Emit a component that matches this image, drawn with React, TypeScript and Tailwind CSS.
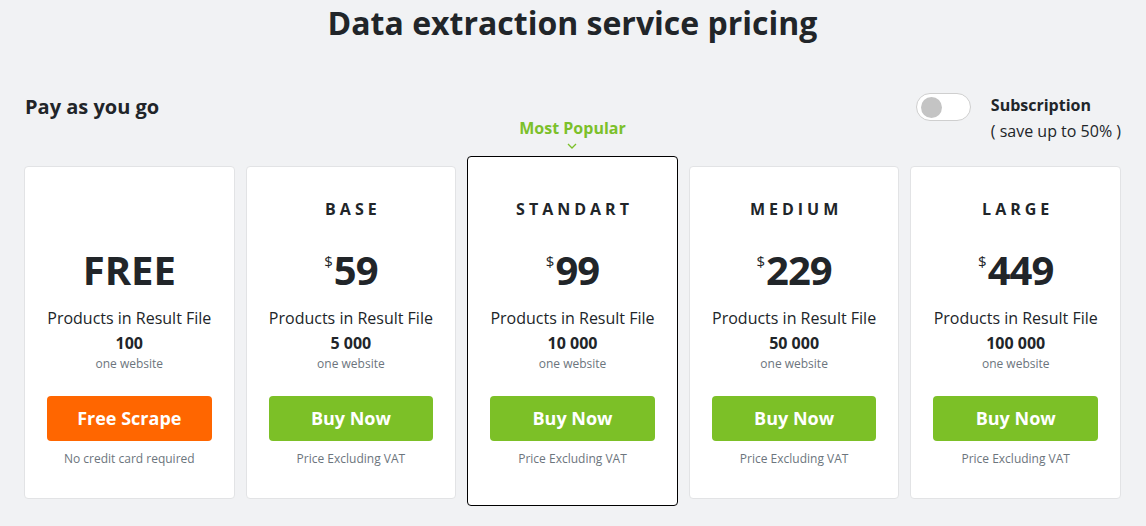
import React from "react";

type Plan = {
  tier: string;
  price: string;
  free?: boolean;
  products: string;
  cta: string;
  note: string;
  popular?: boolean;
};

const plans: Plan[] = [
  { tier: "", price: "FREE", free: true, products: "100", cta: "Free Scrape", note: "No credit card required" },
  { tier: "BASE", price: "59", products: "5 000", cta: "Buy Now", note: "Price Excluding VAT" },
  { tier: "STANDART", price: "99", products: "10 000", cta: "Buy Now", note: "Price Excluding VAT", popular: true },
  { tier: "MEDIUM", price: "229", products: "50 000", cta: "Buy Now", note: "Price Excluding VAT" },
  { tier: "LARGE", price: "449", products: "100 000", cta: "Buy Now", note: "Price Excluding VAT" },
];

function Card({ p }: { p: Plan }) {
  const base =
    "relative flex flex-col items-center bg-white rounded-[4px] text-center";
  const cls = p.popular
    ? `${base} border border-black pt-[40px] pb-[38px]`
    : `${base} mt-[10px] border border-[#e2e3e5] pt-[30px] pb-[31px]`;
  return (
    <div className={cls}>
      {p.popular && (
        <div className="absolute top-[-39px] left-0 right-0 flex flex-col items-center">
          <span className="text-[16px] leading-[20px] font-bold text-[#7cc02a]">Most Popular</span>
          <svg width="12" height="8" viewBox="0 0 12 8" className="mt-[4px]">
            <path d="M2 2 L6 6 L10 2" fill="none" stroke="#7cc02a" strokeWidth="1.3" />
          </svg>
        </div>
      )}
      <div className="h-[24px] text-[16px] leading-[24px] font-bold tracking-[4px] text-[#212529] pl-[4px]">
        {p.tier || "\u00a0"}
      </div>
      <div className="mt-[25px] h-[48px] flex items-start justify-center text-[#212529]">
        {p.free ? (
          <span className="text-[40px] leading-[48px] font-bold">FREE</span>
        ) : (
          <>
            <span className="text-[15px] leading-[15px] mt-[8px] mr-[1px]">$</span>
            <span className="text-[40px] leading-[48px] font-bold tracking-[-1px]">{p.price}</span>
          </>
        )}
      </div>
      <div className="mt-[12px] text-[16px] leading-[24px] text-[#212529]">Products in Result File</div>
      <div className="mt-[1px] text-[16px] leading-[24px] font-bold text-[#212529]">{p.products}</div>
      <div className="mt-[1px] text-[12px] leading-[16px] text-[#6c757d]">one website</div>
      <div className="mt-[24px] w-full px-[22px]">
        <button
          className={`w-full h-[45px] rounded-[4px] text-white text-[18px] font-bold ${
            p.free ? "bg-[#ff6600]" : "bg-[#7cc027]"
          }`}
        >
          {p.cta}
        </button>
      </div>
      <div className="mt-[10px] text-[12px] leading-[16px] text-[#6c757d]">{p.note}</div>
    </div>
  );
}

export default function App() {
  return (
    <div
      className="w-full min-h-[526px] bg-[#f1f2f4] px-[24px] pr-[25px] text-[#212529]"
      style={{ fontFamily: '"Open Sans", "Noto Sans", sans-serif' }}
    >
      <h1 className="text-center text-[32px] leading-[46px] font-bold">Data extraction service pricing</h1>
      <div className="mt-[47px] flex justify-between items-start h-[50px]">
        <div className="pl-[1px] text-[20px] leading-[28px] font-bold">Pay as you go</div>
        <div className="flex items-start">
          <div className="w-[55px] h-[28px] rounded-full bg-white border border-[#cfcfcf] flex items-center pl-[4px]">
            <div className="w-[21px] h-[21px] rounded-full bg-[#c4c4c4]" />
          </div>
          <div className="ml-[20px] flex flex-col">
            <span className="text-[16px] leading-[24px] font-bold">Subscription</span>
            <span className="mt-[2px] text-[16px] leading-[24px]">( save up to 50% )</span>
          </div>
        </div>
      </div>
      <div className="mt-[13px] grid grid-cols-5 gap-[11px] items-start">
        {plans.map((p) => (
          <Card key={p.cta + p.tier} p={p} />
        ))}
      </div>
    </div>
  );
}
